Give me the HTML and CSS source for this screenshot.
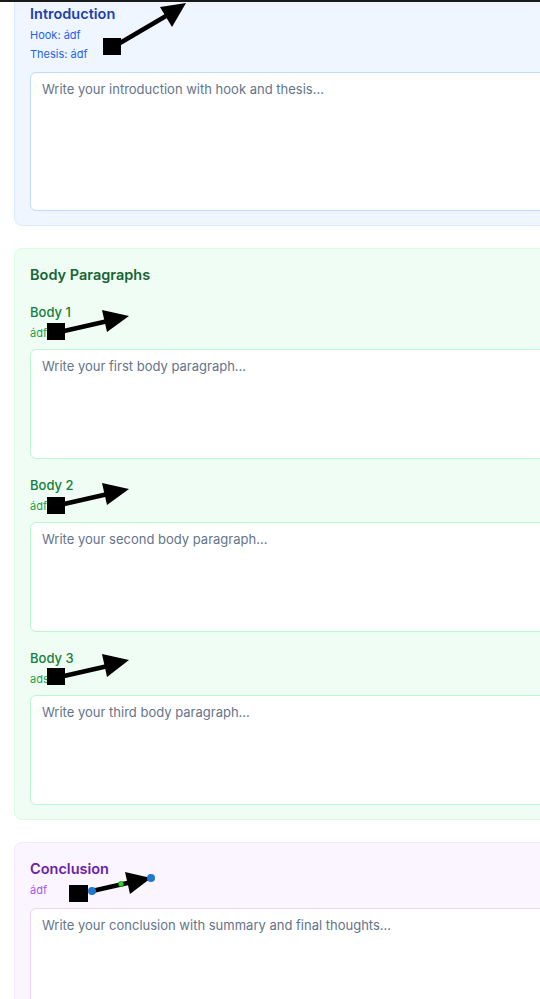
FILE: index.html
```html
<!DOCTYPE html>
<html lang="en">
<head>
<meta charset="utf-8">
<title>Essay Outline</title>
<link rel="stylesheet" href="styles.css">
</head>
<body>
<div class="topline"></div>
<main class="page">
  <section class="card intro">
    <h2 class="card-title">Introduction</h2>
    <p class="meta first">Hook: ádf</p>
    <p class="meta">Thesis: ádf</p>
    <textarea class="field tall" placeholder="Write your introduction with hook and thesis..."></textarea>
  </section>

  <section class="card body">
    <h2 class="card-title">Body Paragraphs</h2>
    <div class="para">
      <h3 class="para-label">Body 1</h3>
      <p class="meta">ádf</p>
      <textarea class="field" placeholder="Write your first body paragraph..."></textarea>
    </div>
    <div class="para">
      <h3 class="para-label">Body 2</h3>
      <p class="meta">ádf</p>
      <textarea class="field" placeholder="Write your second body paragraph..."></textarea>
    </div>
    <div class="para">
      <h3 class="para-label">Body 3</h3>
      <p class="meta">ads</p>
      <textarea class="field" placeholder="Write your third body paragraph..."></textarea>
    </div>
  </section>

  <section class="card concl">
    <h2 class="card-title">Conclusion</h2>
    <p class="meta first">ádf</p>
    <textarea class="field tall" placeholder="Write your conclusion with summary and final thoughts..."></textarea>
  </section>
</main>

<svg class="annot" width="540" height="999" viewBox="0 0 540 999" xmlns="http://www.w3.org/2000/svg">
  <!-- intro -->
  <rect x="103" y="38" width="18" height="17" fill="#000"/>
  <line x1="120" y1="43" x2="166" y2="16" stroke="#000" stroke-width="4.5"/>
  <polygon points="186,3 160,7 172,27" fill="#000"/>
  <!-- body 1 -->
  <rect x="47" y="323" width="18" height="17" fill="#000"/>
  <line x1="64" y1="331" x2="108" y2="321" stroke="#000" stroke-width="4.5"/>
  <polygon points="129,316 102,310 107,332" fill="#000"/>
  <!-- body 2 -->
  <rect x="47" y="497" width="18" height="17" fill="#000"/>
  <line x1="64" y1="504" x2="108" y2="494" stroke="#000" stroke-width="4.5"/>
  <polygon points="129,489 102,483 107,505" fill="#000"/>
  <!-- body 3 -->
  <rect x="47" y="668" width="18" height="17" fill="#000"/>
  <line x1="64" y1="676" x2="108" y2="666" stroke="#000" stroke-width="4.5"/>
  <polygon points="129,660 102,654 107,677" fill="#000"/>
  <!-- conclusion -->
  <rect x="69" y="885" width="19" height="17" fill="#000"/>
  <line x1="92" y1="891" x2="132" y2="882" stroke="#000" stroke-width="4.5"/>
  <polygon points="151,878 125,872 130,894" fill="#000"/>
  <circle cx="92" cy="891" r="4" fill="#1f77d0"/>
  <circle cx="121" cy="884" r="2.6" fill="#22e01a" stroke="#1a6a10" stroke-width="0.6"/>
  <circle cx="151" cy="878" r="4" fill="#1f77d0"/>
</svg>
</body>
</html>
```

FILE: styles.css
```css
html, body {
  margin: 0;
  padding: 0;
  overflow: hidden;
  background: #ffffff;
  font-family: Inter, "Noto Sans", "Liberation Sans", sans-serif;
}

.topline {
  position: absolute;
  top: 0;
  left: 0;
  right: 0;
  height: 2px;
  background: #1a1a1a;
  z-index: 2;
}

.page {
  display: flex;
  flex-direction: column;
  gap: 22px;
  margin-top: -13px;
  padding-left: 14px;
  width: 660px;
}

.card {
  border: 1px solid;
  border-radius: 8px;
  padding: 16px 15px 14px;
  display: flex;
  flex-direction: column;
}

.card-title {
  margin: 0;
  font-size: 14.5px;
  line-height: 20px;
  font-weight: 600;
}

.meta {
  margin: 3px 0 0;
  font-size: 11px;
  line-height: 16px;
}

.field {
  display: block;
  box-sizing: border-box;
  width: 100%;
  height: 110px;
  margin-top: 8px;
  padding: 8px 11px;
  border: 1px solid;
  border-radius: 6px;
  background: #ffffff;
  font-family: inherit;
  font-size: 13px;
  line-height: 16px;
  color: #334155;
  resize: none;
  outline: none;
}

.field::placeholder {
  color: #64748b;
}

.field.tall {
  height: 139px;
  margin-top: 10px;
}

/* intro */
.intro { background: #eff6ff; border-color: #dbeafe; }
.intro .card-title { color: #1e40af; }
.intro .meta { color: #2563eb; }
.intro .field { border-color: #bfdbfe; }

/* body */
.body { background: #f0fdf4; border-color: #dcfce7; }
.body .card-title { color: #166534; margin-bottom: 7px; }
.body .field { border-color: #bbf7d0; }

.para {
  display: flex;
  flex-direction: column;
  margin-top: 10px;
}

.para + .para { margin-top: 16px; }

.para-label {
  margin: 0;
  font-size: 13px;
  line-height: 20px;
  font-weight: 500;
  color: #15803d;
}

.body .meta { color: #16a34a; margin-top: 3px; }

/* conclusion */
.concl { background: #faf5ff; border-color: #f3e8ff; }
.concl .card-title { color: #6b21a8; }
.concl .meta { color: #a855f7; }
.concl .field { border-color: #e9d5ff; }

.annot {
  position: absolute;
  top: 0;
  left: 0;
  z-index: 3;
  pointer-events: none;
}
```
